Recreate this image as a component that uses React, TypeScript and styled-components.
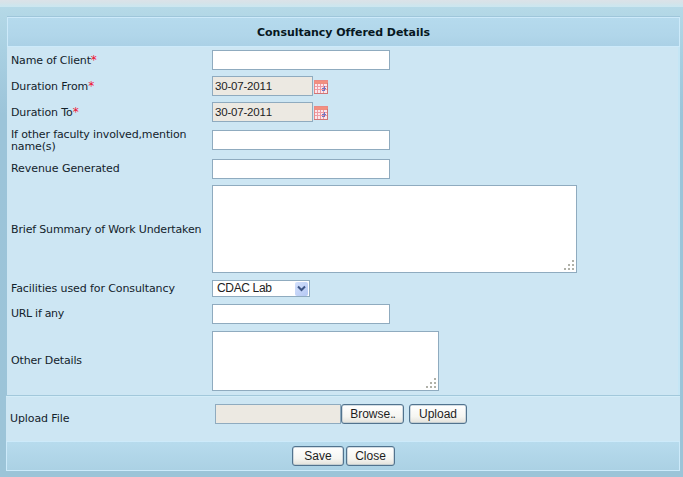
import React from "react";
import styled, { createGlobalStyle } from "styled-components";

const GlobalStyle = createGlobalStyle`
  * { box-sizing: border-box; }
  body { margin: 0; background: #9dc5d9; overflow: hidden; }
`;

const Page = styled.main`
  width: 683px;
  height: 477px;
  padding: 0 3px 0 7px;
  background: linear-gradient(#b5d9e7 7px, #a9d0e2 50px, #9cc4d9 115px, #9cc4d8 100%);
  font: 11px/12px "DejaVu Sans", Verdana, sans-serif;
  color: #13232b;
`;

const TopStrip = styled.div`
  height: 7px;
  margin: 0 -3px 0 -7px;
  background: linear-gradient(#dbe2e8 0, #d5e3e9 3px, #cce6ef 6px);
`;

const Panel = styled.section`
  margin-top: 9px;
  width: 673px;
  border-top: 1px solid #9fc6da;
`;

const Header = styled.h1`
  margin: 0;
  height: 30px;
  border: 1px solid #cdeafa;
  background: linear-gradient(#b5daed, #b1d6ea 60%, #abd1e6);
  display: flex;
  align-items: center;
  justify-content: center;
  font-size: 11px;
  line-height: 12px;
  font-weight: bold;
  letter-spacing: -0.04px;
  padding-top: 2px;
  color: #071722;
`;

const Fields = styled.div`
  background: #cde6f3;
  height: 348px;
  border-right: 2px solid #c5e6f5;
`;

const Row = styled.div<{ $height: number }>`
  height: ${(p) => p.$height}px;
  display: grid;
  grid-template-columns: 201px 1fr;
  align-items: center;
  padding-left: 4px;
`;

const Label = styled.label<{ $tracking?: number }>`
  letter-spacing: ${(p) => p.$tracking ?? 0}px;
  padding-top: 1px;
  white-space: pre-line;
`;

const Required = styled.span`
  color: #f01030;
  font-size: 12px;
  line-height: 10px;
`;

const Controls = styled.div`
  display: flex;
  align-items: center;
`;

const UploadControls = styled(Controls)`
  align-items: flex-start;
`;

const Input = styled.input<{ $width?: number }>`
  width: ${(p) => p.$width ?? 178}px;
  height: 20px;
  margin: 0;
  padding: 0 2px;
  border: 1px solid #8fabbf;
  border-radius: 0;
  background: ${(p) => (p.readOnly ? "#ece9e2" : "#fff")};
  color: #222;
  font: 11.5px "Liberation Sans", Arial, sans-serif;
  letter-spacing: -0.2px;
  font-kerning: none;
  outline: 0;
`;

const Area = styled.div<{ $width: number; $height: number }>`
  width: ${(p) => p.$width}px;
  height: ${(p) => p.$height}px;
  background: #fff;
  border: 1px solid #8fabbf;
  display: flex;
  align-items: flex-end;
  justify-content: flex-end;
  padding: 0 2px 2px 0;
`;

const Select = styled.div`
  width: 98px;
  height: 17px;
  background: #fff;
  border: 1px solid #8fabbf;
  display: flex;
  align-items: center;
  justify-content: space-between;
  padding: 0 1px 0 4px;
  color: #222;
  font: 12px/15px "Liberation Sans", Arial, sans-serif;
  letter-spacing: -0.35px;
`;

const Arrow = styled.span`
  width: 13px;
  height: 14px;
  border-radius: 2px;
  background: linear-gradient(135deg, #d3e0fc, #b4c8f3);
  display: grid;
  place-items: center;
`;

const CalendarSvg = styled.svg`
  margin: 2px 0 0 1px;
`;

const Upload = styled.div`
  margin-left: -1px;
  width: 674px;
  height: 46px;
  border-top: 1px solid #a2c8db;
  box-shadow: inset 0 1px #d3edf8;
  background: #cde6f3;
  display: grid;
  grid-template-columns: 205px 1fr;
  padding: 8px 0 0 4px;
`;

const UploadLabel = styled(Label)`
  padding-top: 9px;
`;

const Footer = styled.footer`
  margin-left: -1px;
  width: 674px;
  height: 30px;
  border: 1px solid #cdeafa;
  background: linear-gradient(#b7dbed, #abd1e4);
  display: flex;
  justify-content: center;
  padding: 4px 0 0 1px;
  gap: 2px;
`;

const Button = styled.button<{ $width: number; $gap?: number }>`
  width: ${(p) => p.$width}px;
  height: 20px;
  margin: 0 0 0 ${(p) => p.$gap ?? 0}px;
  padding: 0;
  border: 1px solid #51738e;
  box-shadow: inset 0 0 0 0.5px #a6b9c6;
  border-radius: 3px;
  background: linear-gradient(#fff, #f5f5f1 65%, #e2e1da);
  color: #1d1d1d;
  font: 12px/17px "Liberation Sans", Arial, sans-serif;
`;

const Dots = styled.span`
  letter-spacing: -1px;
`;

function Grip() {
  const dots = [[8, 0], [4, 4], [8, 4], [0, 8], [4, 8], [8, 8]];
  return (
    <svg width="10" height="10" aria-hidden="true">
      {dots.map(([x, y]) => (
        <rect key={`${x}-${y}`} x={x} y={y} width="2" height="2" fill="#b0b1a8" />
      ))}
    </svg>
  );
}

function Calendar() {
  return (
    <CalendarSvg width="14" height="14" viewBox="0 0 14 14" aria-hidden="true">
      <rect width="14" height="14" fill="#e98a86" />
      <rect x="1" y="1" width="12" height="2.5" fill="#f3907f" />
      <rect x="1" y="4" width="12" height="9" fill="#fbe6ec" />
      <path d="M1 6.5h12M1 9.5h12M3.5 4v9M6.5 4v9M9.5 4v9" stroke="#ee9ca4" />
      <path d="M10.5 6v5M8 8.5h4M8 10.5h3" stroke="#6f75c4" />
      <path d="M0 13.5h14M13.5 3v11" stroke="#cf7676" />
    </CalendarSvg>
  );
}

export default function App() {
  return (
    <>
      <GlobalStyle />
      <Page>
        <TopStrip />
        <Panel>
          <Header>Consultancy Offered Details</Header>
          <Fields>
            <Row $height={26}>
              <Label $tracking={-0.15}>Name of Client<Required>*</Required></Label>
              <Input />
            </Row>
            <Row $height={26}>
              <Label $tracking={-0.1}>Duration From<Required>*</Required></Label>
              <Controls><Input $width={101} readOnly value="30-07-2011" /><Calendar /></Controls>
            </Row>
            <Row $height={26}>
              <Label $tracking={-0.1}>Duration To<Required>*</Required></Label>
              <Controls><Input $width={101} readOnly value="30-07-2011" /><Calendar /></Controls>
            </Row>
            <Row $height={30}>
              <Label $tracking={-0.14}>{"If other faculty involved,mention\nname(s)"}</Label>
              <Input />
            </Row>
            <Row $height={27}>
              <Label $tracking={-0.06}>Revenue Generated</Label>
              <Input />
            </Row>
            <Row $height={94}>
              <Label $tracking={-0.16}>Brief Summary of Work Undertaken</Label>
              <Area $width={365} $height={88}><Grip /></Area>
            </Row>
            <Row $height={25}>
              <Label $tracking={-0.1}>Facilities used for Consultancy</Label>
              <Select>
                CDAC Lab
                <Arrow>
                  <svg width="9" height="7" aria-hidden="true">
                    <path d="M1 1.5l3.5 3.5L8 1.5" fill="none" stroke="#3d5585" strokeWidth="2" />
                  </svg>
                </Arrow>
              </Select>
            </Row>
            <Row $height={25}>
              <Label $tracking={-0.3}>URL if any</Label>
              <Input />
            </Row>
            <Row $height={69}>
              <Label $tracking={-0.15}>Other Details</Label>
              <Area $width={227} $height={60}><Grip /></Area>
            </Row>
          </Fields>
          <Upload>
            <UploadLabel $tracking={-0.1}>Upload File</UploadLabel>
            <UploadControls>
              <Input $width={126} readOnly value="" />
              <Button $width={63}>Browse<Dots>..</Dots></Button>
              <Button $width={58} $gap={5}>Upload</Button>
            </UploadControls>
          </Upload>
          <Footer>
            <Button $width={52}>Save</Button>
            <Button $width={49}>Close</Button>
          </Footer>
        </Panel>
      </Page>
    </>
  );
}
